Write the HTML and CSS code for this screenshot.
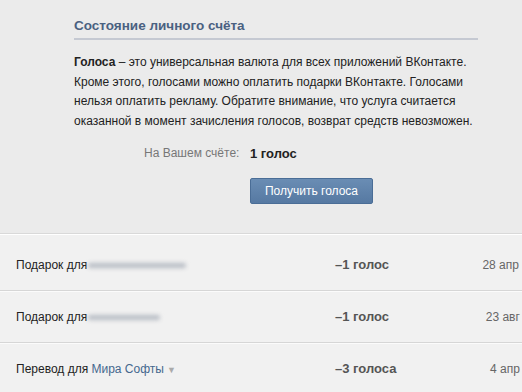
FILE: index.html
```html
<!DOCTYPE html>
<html lang="ru">
<head>
  <meta charset="UTF-8">
  <title>Голоса</title>
  <link rel="stylesheet" href="styles.css">
</head>
<body>
  <div class="account">
    <h2>Состояние личного счёта</h2>
    <p class="info"><b>Голоса</b> – это универсальная валюта для всех приложений ВКонтакте. Кроме этого, голосами можно оплатить подарки ВКонтакте. Голосами нельзя оплатить рекламу. Обратите внимание, что услуга считается оказанной в момент зачисления голосов, возврат средств невозможен.</p>
    <div class="balance">
      <span class="label">На Вашем счёте:</span>
      <span class="value">1 голос</span>
    </div>
    <button class="get-btn">Получить голоса</button>
  </div>

  <div class="history">
    <div class="row">
      <div class="title">Подарок для <span class="hidden-name wide"></span></div>
      <div class="amount">–1 голос</div>
      <div class="date">28 апр 2012</div>
    </div>
    <div class="row">
      <div class="title">Подарок для <span class="hidden-name"></span></div>
      <div class="amount">–1 голос</div>
      <div class="date">23 авг 2011</div>
    </div>
    <div class="row">
      <div class="title">Перевод для <a href="#">Мира Софты</a><span class="arrow">▼</span></div>
      <div class="amount">–3 голоса</div>
      <div class="date">4 апр 2011</div>
    </div>
  </div>
</body>
</html>
```

FILE: styles.css
```css
* {
  margin: 0;
  padding: 0;
  box-sizing: border-box;
  font-family: 'Liberation Sans', Arial, sans-serif;
}

body {
  background-color: #ebebeb;
  color: #222;
  font-size: 12px;
  overflow: hidden;
}

.account {
  padding: 18px 0 0 74px;
  height: 233px;
}

.account h2 {
  width: 404px;
  font-size: 13.5px;
  color: #4a6181;
  padding-bottom: 5px;
  border-bottom: 2px solid #c5c9d2;
}

.info {
  width: 400px;
  margin-top: 13px;
  line-height: 19.5px;
}

.balance {
  display: flex;
  margin: 15px 0 0 70px;
}

.balance .label {
  width: 106px;
  color: #777;
}

.balance .value {
  font-weight: bold;
  font-size: 13px;
}

.get-btn {
  display: block;
  margin: 17px 0 0 176px;
  width: 123px;
  height: 26px;
  border: 1px solid #4a6d96;
  border-radius: 2px;
  background: linear-gradient(#6a8db4, #5679a2);
  color: #fff;
  font-size: 12px;
}

.history {
  width: 600px;
  background-color: #f1f1f1;
  border-top: 1px solid #d9d9d9;
  box-shadow: inset 0 1px 0 #fff;
  padding-top: 5px;
}

.row {
  display: flex;
  align-items: center;
  height: 52px;
  border-bottom: 1px solid #d6d6d6;
  box-shadow: 0 1px 0 #fbfbfb;
}

.row .title {
  width: 335px;
  padding-left: 16px;
}

.title a {
  color: #45688e;
  text-decoration: none;
}

.arrow {
  color: #aaa;
  font-size: 9px;
  margin-left: 3px;
}

.hidden-name {
  display: inline-block;
  vertical-align: middle;
  width: 72px;
  height: 5px;
  margin-left: -2px;
  background-color: #b7bcc4;
  border-radius: 3px;
  filter: blur(2px);
}

.hidden-name.wide {
  width: 98px;
}

.amount {
  width: 100px;
  font-weight: bold;
  font-size: 13px;
  color: #555;
}

.date {
  width: 114px;
  text-align: right;
  color: #666;
}
```
